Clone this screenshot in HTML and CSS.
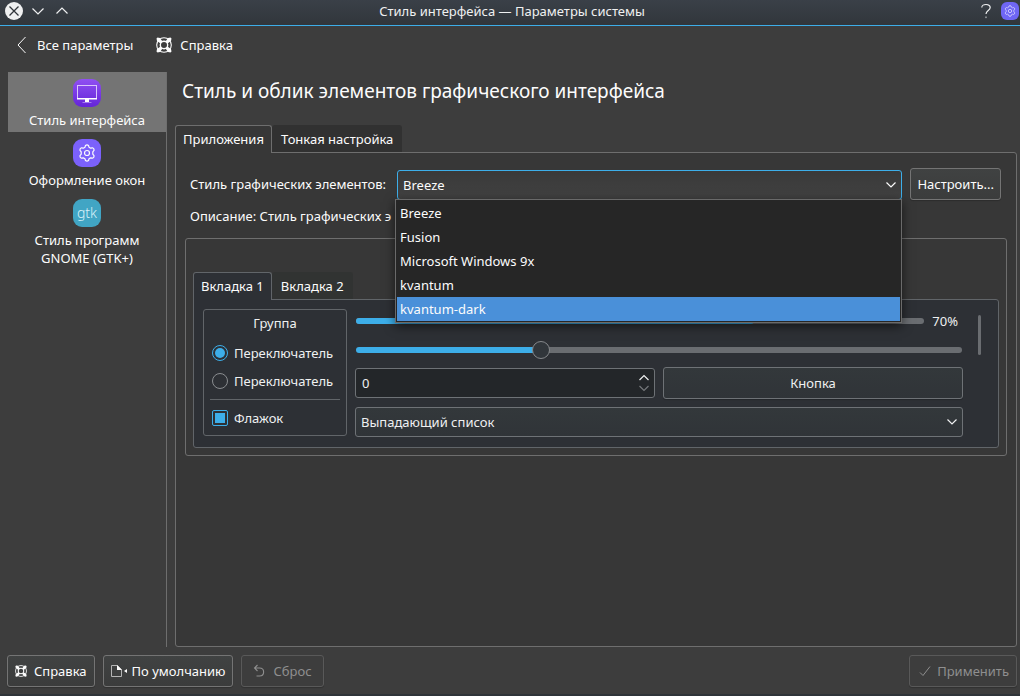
FILE: index.html
```html
<!DOCTYPE html>
<html lang="ru">
<head>
    <meta charset="UTF-8">
    <meta name="viewport" content="width=device-width, initial-scale=1.0">
    <title>Стиль интерфейса — Параметры системы</title>
    <link rel="stylesheet" href="styles.css">
</head>
<body>

<svg class="sprite" aria-hidden="true">
    <symbol id="chevron" viewBox="0 0 12 12"><path d="M1.5 3.5 L6 8 L10.5 3.5" fill="none" stroke="currentColor" stroke-width="1.2"/></symbol>
    <symbol id="gear" viewBox="0 0 18 18"><path d="M7.5 1.500 Q9 .2 10.500 1.500 L11 3.200 12.700 4.200 14.500 3.800 Q16.300 4.500 16 6.300 L14.800 7.800 V10.200 L16 11.700 Q16.300 13.500 14.500 14.200 L12.700 13.800 11 14.800 10.500 16.500 Q9 17.800 7.500 16.500 L7 14.800 5.300 13.800 3.500 14.200 Q1.700 13.500 2 11.700 L3.200 10.200 V7.800 L2 6.300 Q1.700 4.500 3.500 3.800 L5.300 4.200 7 3.200z" fill="none" stroke="currentColor" stroke-width="1.200" stroke-linejoin="round"/><circle cx="9" cy="9" r="2.500" fill="none" stroke="currentColor" stroke-width="1.200"/></symbol>
    <symbol id="lifebuoy" viewBox="0 0 16 16">
        <circle cx="8" cy="8" r="7.300" fill="none" stroke="currentColor" stroke-width="1.1"/>
        <circle cx="8" cy="8" r="3.700" fill="none" stroke="currentColor" stroke-width="1.4"/>
        <path d="M.5 1.500 1.500 .5 4 1 6.500 4.500 4.500 6.500 1 4z M14.500 .5 15.500 1.500 15 4 11.500 6.500 9.500 4.500 12 1z M1.500 15.500 .5 14.500 1 12 4.500 9.500 6.500 11.500 4 15z M15.500 14.500 14.500 15.500 12 15 9.500 11.500 11.500 9.500 15 12z" fill="currentColor"/>
    </symbol>
</svg>

<div class="window">
    <header class="titlebar">
        <div class="title-buttons">
            <button class="tb" aria-label="Закрыть"><svg width="18" height="18" viewBox="0 0 18 18"><circle cx="9" cy="9" r="9" fill="#eff0f1"/><path d="M4.500 4.500 13.500 13.500 M13.500 4.500 4.500 13.500" stroke="#31363b" stroke-width="1.300"/></svg></button>
            <button class="tb" aria-label="Свернуть"><svg width="18" height="18" viewBox="0 0 18 18"><path d="M3.500 6.500 9 12 14.500 6.500" fill="none" stroke="#eff0f1" stroke-width="1.200"/></svg></button>
            <button class="tb" aria-label="Развернуть"><svg width="18" height="18" viewBox="0 0 18 18"><path d="M3.500 11.500 9 6 14.500 11.500" fill="none" stroke="#eff0f1" stroke-width="1.200"/></svg></button>
        </div>
        <span class="title">Стиль интерфейса — Параметры системы</span>
        <div class="title-buttons right">
            <button class="tb" aria-label="Справка"><svg width="18" height="18" viewBox="0 0 18 18"><path d="M4.800 5.500 C4.800 1.500 13.200 1.500 13.200 5.500 C13.200 8.500 9 8.500 9 12" fill="none" stroke="#eff0f1" stroke-width="1.200"/><rect x="8.200" y="14.500" width="1.600" height="1.600" fill="#9a9da0"/></svg></button>
            <span class="tb app"><svg width="12" height="12"><use href="#gear"/></svg></span>
        </div>
    </header>

    <nav class="toolbar">
        <button class="tool"><svg width="12" height="18" viewBox="0 0 12 18"><path d="M9.500 1 2 9 9.500 17" fill="none" stroke="currentColor" stroke-width="1"/></svg>Все параметры</button>
        <button class="tool"><svg width="16" height="16"><use href="#lifebuoy"/></svg>Справка</button>
    </nav>

    <div class="body">
        <aside class="sidebar">
            <a href="#style" class="item active">
                <span class="icon monitor"><svg width="28" height="28" viewBox="0 0 28 28"><rect x="4.500" y="6.500" width="19" height="13" fill="none" stroke="#d9c6fb"/><path d="M4 19h20v1.500H4z M12 20h4v3h-4z" fill="#fff"/><path d="M9.500 23.500h9" stroke="#a57bf2"/></svg></span>
                Стиль интерфейса
            </a>
            <a href="#decor" class="item">
                <span class="icon deco"><svg width="18" height="18"><use href="#gear"/></svg></span>
                Оформление окон
            </a>
            <a href="#gtk" class="item">
                <span class="icon gtk">gtk</span>
                Стиль программ<br>GNOME (GTK+)
            </a>
        </aside>

        <main class="content">
            <h1>Стиль и облик элементов графического интерфейса</h1>
            <div class="tabs">
                <button class="tab active">Приложения</button>
                <button class="tab">Тонкая настройка</button>
            </div>
            <section class="pane">
                <div class="row">
                    <label for="widgetStyle">Стиль графических элементов:</label>
                    <div class="combo focus">
                        <select id="widgetStyle"><option>Breeze</option><option>Fusion</option><option>Microsoft Windows 9x</option><option>kvantum</option><option>kvantum-dark</option></select>
                        <svg class="arrow" width="12" height="12"><use href="#chevron"/></svg>
                        <ul class="popup">
                            <li>Breeze</li>
                            <li>Fusion</li>
                            <li>Microsoft Windows 9x</li>
                            <li>kvantum</li>
                            <li class="selected">kvantum-dark</li>
                        </ul>
                    </div>
                    <button class="btn">Настроить...</button>
                </div>
                <p class="desc">Описание: Стиль графических э</p>

                <div class="preview">
                    <div class="tabs">
                        <button class="tab active">Вкладка 1</button>
                        <button class="tab">Вкладка 2</button>
                    </div>
                    <div class="demo">
                        <fieldset class="group" aria-labelledby="groupTitle">
                            <div class="group-title" id="groupTitle">Группа</div>
                            <label class="check"><input type="radio" name="r" checked>Переключатель</label>
                            <label class="check"><input type="radio" name="r">Переключатель</label>
                            <hr>
                            <label class="check"><input type="checkbox" checked>Флажок</label>
                        </fieldset>
                        <div class="controls">
                            <div class="progress-row">
                                <progress id="bar" max="100" value="70"></progress>
                                <label for="bar">70%</label>
                            </div>
                            <input class="slider" type="range" min="0" max="100" value="30" aria-label="Ползунок">
                            <div class="pair">
                                <div class="spin">
                                    <input type="text" value="0" aria-label="Число">
                                    <div class="spin-arrows">
                                        <svg class="up" width="12" height="10" viewBox="0 0 12 10"><path d="M1.500 3 6 7.500 10.500 3" fill="none" stroke="currentColor" stroke-width="1.200"/></svg>
                                        <svg class="down" width="12" height="10" viewBox="0 0 12 10"><path d="M1.500 3 6 7.500 10.500 3" fill="none" stroke="currentColor" stroke-width="1.200"/></svg>
                                    </div>
                                </div>
                                <button class="btn">Кнопка</button>
                            </div>
                            <div class="combo">
                                <select aria-label="Выпадающий список"><option>Выпадающий список</option></select>
                                <svg class="arrow" width="12" height="12"><use href="#chevron"/></svg>
                            </div>
                        </div>
                        <div class="scroll"></div>
                    </div>
                </div>
            </section>
        </main>
    </div>

    <footer class="footer">
        <button class="btn"><svg width="12" height="12"><use href="#lifebuoy"/></svg>Справка</button>
        <button class="btn defaults"><svg width="16" height="14" viewBox="0 0 16 14"><path d="M.5 1.500h6l4 4v7H.5z" fill="none" stroke="#b5b5b5"/><path d="M6 1v5h5z M16 5v4l-3-2z" fill="currentColor"/></svg>По умолчанию</button>
        <button class="btn" disabled><svg width="12" height="14" viewBox="0 0 12 14"><path d="M4.500 1 1.500 4 4.500 7 M1.500 4 H6.500 C12 4 12 12 6.500 12 H3.500" fill="none" stroke="currentColor" stroke-width="1.100"/></svg>Сброс</button>
        <button class="btn apply" disabled><svg width="12" height="12" viewBox="0 0 12 12"><path d="M1 7.500 4 10.500 11 1.500" fill="none" stroke="currentColor"/></svg>Применить</button>
    </footer>
</div>

</body>
</html>
```

FILE: styles.css
```css
* { box-sizing: border-box; }
body { margin: 0; background: #3d3d3d; color: #fcfcfc; font: 13px/18px "Noto Sans", sans-serif; }
button, input, select { font: inherit; color: inherit; margin: 0; }
button { background: none; border: none; padding: 0; }
svg { flex: none; }
.sprite { position: absolute; width: 0; height: 0; }

.window { display: flex; flex-direction: column; min-height: 100vh; border-bottom: 2px solid #2f3439; }

/* title bar */
.titlebar { display: grid; grid-template-columns: 1fr auto 1fr; align-items: center; height: 26px; padding: 0 1px 3px 5px; background: linear-gradient(#3a4048, #31363b); border-bottom: 1px solid #3daee9; color: #eff0f1; }
.title-buttons { display: flex; gap: 6px; }
.title-buttons.right { justify-content: flex-end; }
.tb { display: flex; align-items: center; justify-content: center; width: 18px; height: 18px; }
.tb.app { background: #6f66f5; border-radius: 6px; color: #dcd8ff; }

/* toolbar */
.toolbar { display: flex; gap: 22px; height: 46px; padding: 0 16px 8px; }
.tool { display: flex; align-items: center; gap: 8px; }
.tool:first-child { gap: 9px; padding-right: 1px; }

/* main area */
.body { display: flex; flex: 1; gap: 8px; padding: 0 3px 0 8px; }
.sidebar { width: 159px; border-right: 1px solid #6e6e6e; }
.item { display: block; padding: 7px 0 3px; text-align: center; color: inherit; text-decoration: none; }
.item.active { background: #747474; }
.icon { display: flex; align-items: center; justify-content: center; width: 28px; height: 28px; margin: 0 auto 4px; border-radius: 9px; }
.monitor { background: linear-gradient(#9050f2, #6425d8); }
.deco { background: #7b61fb; }
.gtk { background: #41a5c4; color: #d8f1f8; font-size: 14px; font-weight: 300; }

.content { display: flex; flex: 1; flex-direction: column; min-width: 0; }
h1 { margin: 0 0 20px; padding: 5px 7px 0; font-size: 19px; line-height: 28px; font-weight: 400; }
.tabs { display: flex; margin-bottom: -1px; position: relative; }
.tab { height: 27px; margin-bottom: 1px; padding: 0 9px; background: #313131; border-radius: 3px 3px 0 0; }
.tab.active { height: 28px; margin: 0; padding: 0 7px 2px; border: 1px solid #6e6e6e; border-bottom: none; background: #373737; }
.pane { flex: 1; padding: 15px 9px 9px; border: 1px solid #6e6e6e; border-radius: 0 3px 3px 3px; background: #373737; }

.row { display: flex; align-items: center; gap: 8px; padding: 0 6px 0 5px; }
.row label { margin-right: 3px; }
.desc { margin: 7px 5px 13px; }

.btn { display: flex; align-items: center; justify-content: center; gap: 6px; height: 32px; padding: 0 6px; border: 1px solid #747474; border-radius: 3px; background: linear-gradient(#404242, #3b3c3c); box-shadow: 0 1px 1px rgba(0,0,0,0.2); }
.btn:disabled { border-color: #595959; color: #8f8f8f; background: #3d3d3d; }

.combo { position: relative; flex: 1; height: 30px; }
.combo select { display: block; width: 100%; height: 100%; padding: 0 5px; appearance: none; border: 1px solid #6e7276; border-radius: 3px; background: linear-gradient(#33383b, #303438); outline: none; }
.combo.focus { margin-top: 1px; }
.combo.focus select { border-color: #3daee9; background: linear-gradient(#393939, #424242); }
.arrow { position: absolute; right: 5px; top: 9px; pointer-events: none; }

.popup { position: absolute; z-index: 2; top: 29px; left: -2px; right: 0; margin: 0; padding: 1px; list-style: none; border: 1px solid #6a6a6a; background: #262626; box-shadow: 0 3px 10px rgba(0,0,0,0.6); }
.popup li { height: 24px; padding: 3px; }
.popup .selected { background: #4a90d9; }

/* style preview */
.preview { padding: 33px 7px 7px; border: 1px solid #6e6e6e; border-radius: 3px; }
.preview .tab.active { background: #2d3035; border-color: #616569; }
.preview .tab { background: #313332; }
.demo { display: flex; align-items: flex-start; padding: 9px 17px 10px 9px; border: 1px solid #616569; border-radius: 0 3px 3px 3px; background: #2d3035; color: #eff0f1; }
.group { width: 144px; height: 127px; margin: 0 8px 0 0; padding: 4px 6px; border: 1px solid #616569; border-radius: 3px; }
.group-title { margin-bottom: 7px; text-align: center; }
.check { display: flex; align-items: center; gap: 6px; height: 28px; padding-left: 2px; }
.check input { flex: none; display: grid; place-items: center; width: 16px; height: 16px; appearance: none; border: 1px solid #8a8d90; border-radius: 2px; }
.check input[type=radio] { border-radius: 50%; }
.check input:checked { border-color: #3daee9; }
.check input:checked::before { content: ""; width: 10px; height: 10px; background: #3daee9; }
.check input[type=radio]:checked::before { border-radius: 50%; }
.group hr { height: 1px; margin: 4px 0; border: none; background: #616569; }

.controls { flex: 1; min-width: 0; }
.progress-row { display: flex; align-items: center; gap: 8px; height: 24px; padding: 0 5px 0 1px; }
progress { flex: 1; min-width: 0; height: 6px; appearance: none; border: none; }
progress::-webkit-progress-bar { background: #6a6d71; border-radius: 3px; }
progress::-webkit-progress-value { background: #3daee9; border-radius: 3px; }
.slider { display: block; width: calc(100% - 2px); height: 18px; margin: 8px 1px; appearance: none; background: none; }
.slider::-webkit-slider-runnable-track { height: 6px; border-radius: 3px; background: linear-gradient(to right, #3daee9 31%, #6a6d71 31%); }
.slider::-webkit-slider-thumb { width: 18px; height: 18px; margin-top: -6px; appearance: none; border: 1px solid #85888b; border-radius: 50%; background: #31363b; }
.pair { display: grid; grid-template-columns: 1fr 1fr; align-items: center; gap: 8px; margin-bottom: 8px; }
.spin { display: flex; align-items: center; height: 30px; padding: 0 4px 0 5px; border: 1px solid #6e7276; border-radius: 3px; background: #232629; }
.spin input { flex: 1; min-width: 0; padding: 0 1px; border: none; outline: none; background: none; }
.spin-arrows { display: flex; flex-direction: column; }
.up { transform: rotate(180deg); }
.down { color: #75787b; }
.demo .btn { border-color: #6e7276; background: linear-gradient(#33383b, #303438); }
.scroll { width: 3px; height: 40px; margin: 6px 0 0 15px; border-radius: 2px; background: #6a6d71; }

/* bottom buttons */
.footer { display: flex; gap: 8px; padding: 8px 3px 7px 7px; }
.footer .btn { gap: 7px; padding: 0 7px; }
.footer .defaults { gap: 5px; }
.footer .btn:disabled { gap: 8px; padding: 0 11px; }
.footer .apply:disabled { margin-left: auto; padding: 0 7px 0 9px; gap: 6px; }
```
